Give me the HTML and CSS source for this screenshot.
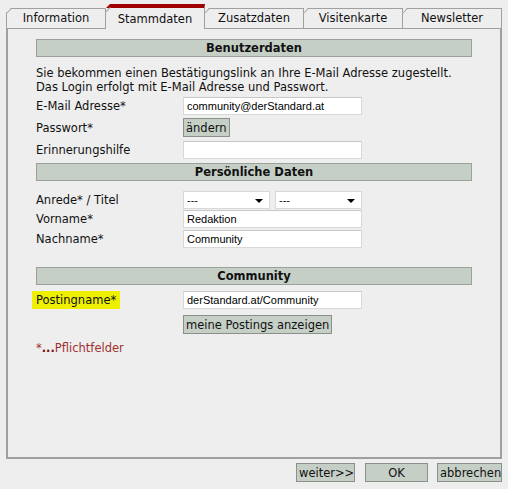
FILE: index.html
```html
<!DOCTYPE html>
<html lang="de">

<head>
    <meta charset="UTF-8">
    <title>Stammdaten</title>
    <link rel="stylesheet" href="styles.css">
</head>

<body>
    <div class="tabs">
        <div class="tab">Information</div>
        <div class="tab active">Stammdaten</div>
        <div class="tab">Zusatzdaten</div>
        <div class="tab">Visitenkarte</div>
        <div class="tab">Newsletter</div>
    </div>
    <div class="panel">
        <div class="section">Benutzerdaten</div>
        <p class="info">Sie bekommen einen Bestätigungslink an Ihre E-Mail Adresse zugestellt.<br>
            Das Login erfolgt mit E-Mail Adresse und Passwort.</p>
        <div class="row">
            <label>E-Mail Adresse*</label>
            <input type="text" value="community@derStandard.at">
        </div>
        <div class="row">
            <label>Passwort*</label>
            <button class="btn">ändern</button>
        </div>
        <div class="row gap4">
            <label>Erinnerungshilfe</label>
            <input type="text" value="">
        </div>

        <div class="section gap4">Persönliche Daten</div>
        <div class="row first">
            <label>Anrede* / Titel</label>
            <div class="selects">
                <div class="select">---<span class="arrow"></span></div>
                <div class="select">---<span class="arrow"></span></div>
            </div>
        </div>
        <div class="row gap1">
            <label>Vorname*</label>
            <input type="text" value="Redaktion">
        </div>
        <div class="row gap2">
            <label>Nachname*</label>
            <input type="text" value="Community">
        </div>

        <div class="section community">Community</div>
        <div class="row gap6">
            <label><span class="mark">Postingname*</span></label>
            <input type="text" value="derStandard.at/Community">
        </div>
        <div class="row gap6">
            <label></label>
            <button class="btn">meine Postings anzeigen</button>
        </div>
        <p class="required">*<b>...</b>Pflichtfelder</p>
    </div>
    <div class="actions">
        <button class="btn next">weiter&gt;&gt;</button>
        <button class="btn ok">OK</button>
        <button class="btn cancel">abbrechen</button>
    </div>
</body>

</html>
```

FILE: styles.css
```css
body {
    font-family: 'DejaVu Sans', Verdana, sans-serif;
    font-size: 11.5px;
    color: #111;
    background-color: #eeeeee;
    margin: 0;
    padding: 5px 6px 0 6px;
    width: 496px;
}

.tabs {
    display: flex;
    align-items: flex-end;
    height: 23px;
}

.tab {
    width: 98px;
    height: 19px;
    line-height: 19px;
    text-align: center;
    border: 1px solid #a0a0a0;
    border-bottom: none;
    margin-right: -1px;
    background-color: #eeeeee;
    clip-path: polygon(5px 0, 100% 0, 100% 100%, 0 100%, 0 5px);
    position: relative;
}

.tab::before {
    content: "";
    position: absolute;
    left: -1px;
    top: 4px;
    width: 7px;
    height: 1px;
    background: #a0a0a0;
    transform: rotate(-45deg);
    transform-origin: left top;
}

.tab.active {
    border-top: 4px solid #a00000;
    border-color: #a00000 #a0a0a0 #a0a0a0 #a0a0a0;
    z-index: 1;
    margin-bottom: -1px;
    height: 20px;
    line-height: 22px;
    padding-bottom: 1px;
}

.tab:last-child {
    margin-right: 0;
}

.panel {
    border: 2px solid #a0a0a0;
    border-top: 1px solid #a0a0a0;
    height: 418px;
    padding: 10px 28px 0 28px;
}

.section {
    background-color: #c5cfc6;
    border: 1px solid #9aa09a;
    height: 16px;
    line-height: 16px;
    text-align: center;
    font-weight: bold;
}

.community {
    margin-top: 19px;
}

.info {
    margin: 9px 0 2px 0;
    line-height: 14px;
}

.row {
    display: flex;
    align-items: center;
    margin-top: 3px;
}

.row:first-of-type {
    margin-top: 0;
}

.gap1 { margin-top: 1px; }
.gap2 { margin-top: 2px; }
.gap4 { margin-top: 4px; }
.gap6 { margin-top: 6px; }
.row.first { margin-top: 10px; }

.row label {
    width: 147px;
    flex-shrink: 0;
}

.mark {
    background-color: #eef000;
    padding: 2px 4px;
    margin-left: -4px;
}

input {
    width: 179px;
    height: 18px;
    box-sizing: border-box;
    border: 1px solid #d8d8d8;
    border-top-color: #c8c8c8;
    background: white;
    font-family: 'Liberation Sans', Arial, sans-serif;
    font-size: 11px;
    padding: 0 3px;
    color: #000;
    margin: 0;
}

.selects {
    display: flex;
    gap: 5px;
}

.select {
    width: 87px;
    height: 18px;
    box-sizing: border-box;
    border: 1px solid #d8d8d8;
    background: white;
    font-family: 'Liberation Sans', Arial, sans-serif;
    font-size: 11px;
    line-height: 16px;
    padding: 0 3px;
    position: relative;
}

.arrow {
    position: absolute;
    right: 6px;
    top: 7px;
    border-left: 4px solid transparent;
    border-right: 4px solid transparent;
    border-top: 4px solid #000;
}

.btn {
    font-family: 'DejaVu Sans', Verdana, sans-serif;
    font-size: 11.5px;
    color: #111;
    background-color: #c5cfc6;
    border: 1px solid #8a908a;
    height: 19px;
    padding: 0 2px;
    margin: 0;
    cursor: pointer;
}

.required {
    margin: 7px 0 0 0;
    line-height: 14px;
    color: #a03030;
}

.required b {
    color: #7a1010;
}

.actions {
    display: flex;
    justify-content: flex-end;
    margin-top: 4px;
}

.actions .next {
    width: 59px;
}

.actions .ok {
    width: 63px;
    margin-left: 10px;
}

.actions .cancel {
    width: 65px;
    margin-left: 9px;
}
```
